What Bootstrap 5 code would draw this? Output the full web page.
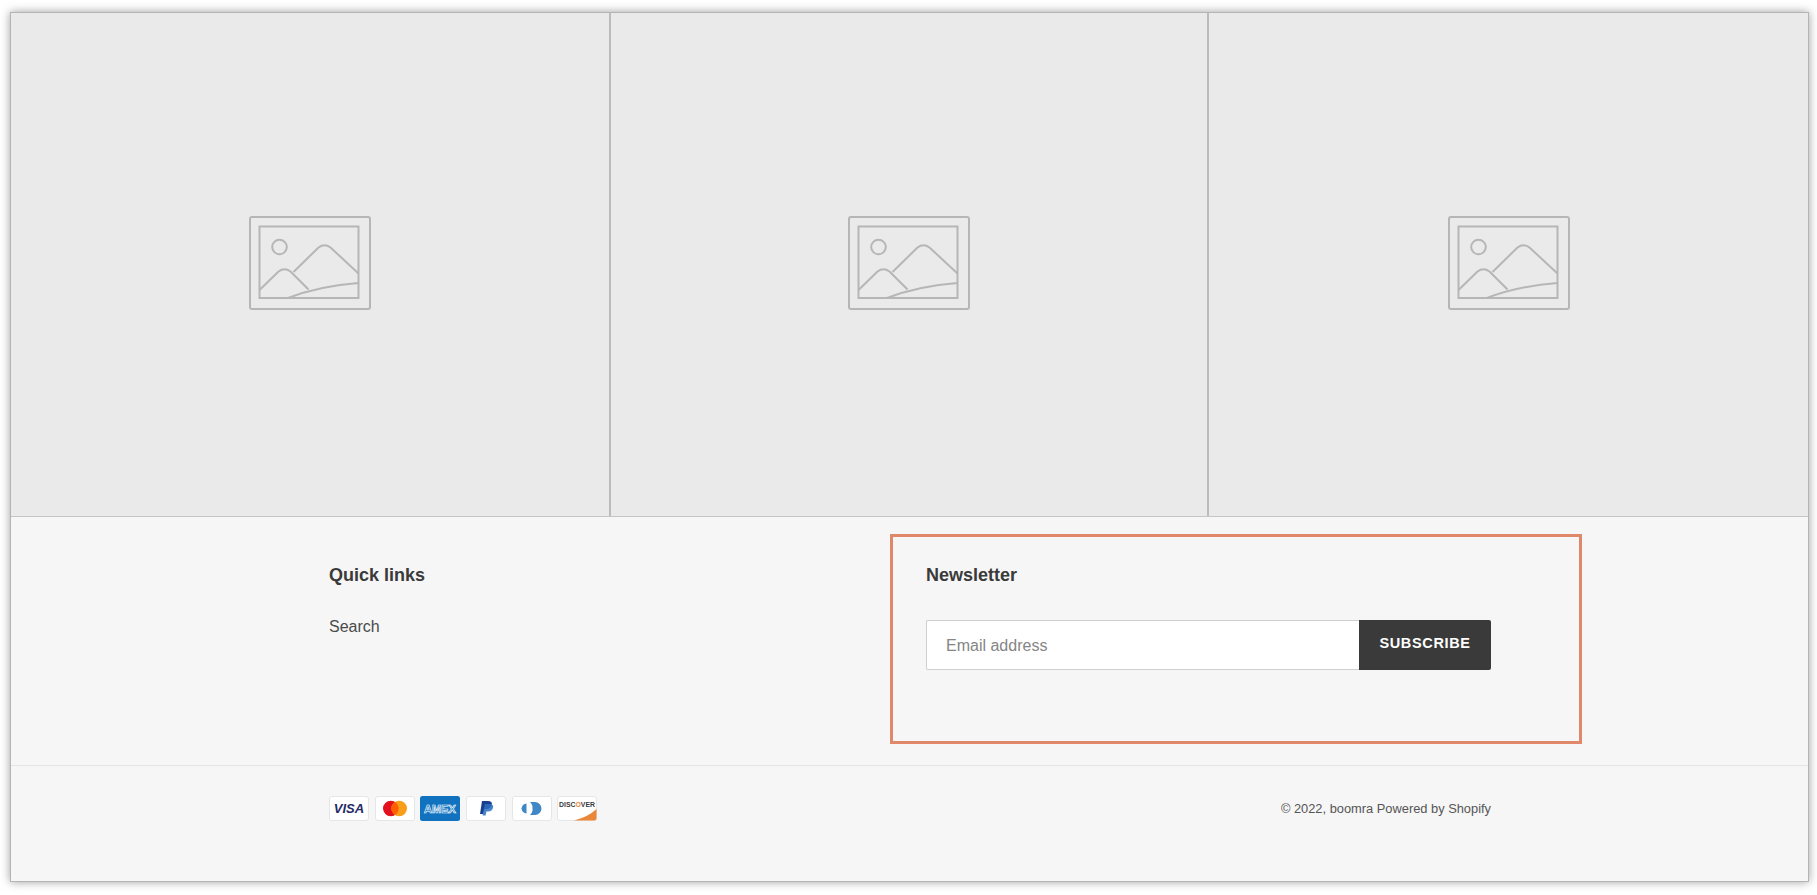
<!DOCTYPE html>
<html lang="en">
<head>
    <meta charset="UTF-8">
    <title>boomra</title>
    <link href="https://cdn.jsdelivr.net/npm/bootstrap@5.3.0/dist/css/bootstrap.min.css" rel="stylesheet">
    <style>
        html, body { height: 100%; }
        body {
            background: #fff;
            font-family: "Liberation Sans", Arial, sans-serif;
            color: #3a3a3a;
            padding: 12px 8px 13px 10px;
            overflow: hidden;
        }
        .shot-frame {
            position: relative;
            height: 870px;
            background: #f6f6f6;
            border: 1px solid #b4b4b4;
            box-shadow: 0 0 9px rgba(0, 0, 0, .38);
        }
        .tile {
            height: 503px;
            padding-bottom: 3px;
            background: #eaeaea;
            border-right: 2px solid #bcbcbc;
        }
        .tile-last { border-right: 0; }
        .tile-row { border-bottom: 1px solid #c6c6c6; padding-left: 1px; background: #eaeaea; }
        .foot-wrap { width: 1162px; margin-left: 318px; }
        .foot-top { height: 249px; border-bottom: 1px solid #e4e4e4; }
        .foot-left { width: 597px; padding-top: 47px; }
        .foot-right { flex: 1; padding-top: 47px; }
        .foot-title { font-size: 18px; font-weight: 700; line-height: 23px; margin: 0 0 28px; color: #3a3a3a; }
        .foot-right .foot-title { margin-bottom: 33px; }
        .foot-link { font-size: 16px; line-height: 24px; color: #4a4a4a; text-decoration: none; }
        .news-input {
            height: 50px;
            border: 1px solid #cfcfcf;
            border-right: 0;
            border-radius: 2px 0 0 2px;
            background: #fff;
            padding: 2px 19px 0;
            font-size: 16px;
            color: #3a3a3a;
        }
        .news-input::placeholder { color: #858585; opacity: 1; }
        .news-input:focus { box-shadow: none; border-color: #cfcfcf; background: #fff; }
        .news-btn {
            width: 132px;
            height: 50px;
            background: #3a3a3a;
            border: 0;
            border-radius: 0 2px 2px 0;
            color: #fff;
            font-size: 14.5px;
            font-weight: 700;
            letter-spacing: .65px;
            padding: 0 0 2px;
        }
        .news-btn:hover { background: #3a3a3a; color: #fff; }
        .foot-bottom { padding-top: 30px; }
        .pay-list { gap: 5.7px; }
        .pay-list svg { display: block; }
        .copy-text { font-size: 12.85px; color: #555; }
        .copy-text a { color: inherit; text-decoration: none; }
        .focus-box {
            position: absolute;
            left: 879px;
            top: 521px;
            width: 692px;
            height: 210px;
            border: 3px solid #e0886a;
            pointer-events: none;
        }
    </style>
</head>
<body>
<svg width="0" height="0" class="position-absolute">
    <symbol id="placeholder" viewBox="0 0 122 94">
        <g fill="none" stroke="#b6b6b6" stroke-width="2">
            <rect x="1" y="1" width="120" height="92" rx="2"/>
            <rect x="10.500" y="10.500" width="99" height="71.500"/>
            <circle cx="30.500" cy="31" r="7.300"/>
            <path d="M10.500 74 L29.500 55.500 Q35.500 51 41.500 55.500 L59.500 73.500"/>
            <path d="M44.500 56 L69.500 31.500 Q75.500 27 81.500 31.500 L109.500 57.500"/>
            <path d="M39 82 Q70 70 109.500 67"/>
        </g>
    </symbol>
</svg>

<div class="shot-frame">
    <div class="row g-0 tile-row">
        <div class="col-4">
            <div class="tile d-flex align-items-center justify-content-center">
                <svg width="122" height="94"><use href="#placeholder"/></svg>
            </div>
        </div>
        <div class="col-4">
            <div class="tile d-flex align-items-center justify-content-center">
                <svg width="122" height="94"><use href="#placeholder"/></svg>
            </div>
        </div>
        <div class="col-4">
            <div class="tile tile-last d-flex align-items-center justify-content-center">
                <svg width="122" height="94"><use href="#placeholder"/></svg>
            </div>
        </div>
    </div>

    <div class="foot-top">
        <div class="foot-wrap d-flex">
            <div class="foot-left">
                <h4 class="foot-title">Quick links</h4>
                <a href="#" class="foot-link">Search</a>
            </div>
            <div class="foot-right">
                <h4 class="foot-title">Newsletter</h4>
                <form class="input-group">
                    <input type="email" class="form-control news-input" placeholder="Email address">
                    <button type="button" class="btn news-btn">SUBSCRIBE</button>
                </form>
            </div>
        </div>
    </div>

    <div class="foot-wrap foot-bottom d-flex justify-content-between align-items-center">
        <div class="d-flex pay-list">
            <svg width="40" height="25" viewBox="0 0 40 25">
                <rect x=".5" y=".5" width="39" height="24" rx="2.500" fill="#fff" stroke="#e6e6e6"/>
                <text x="20" y="17" text-anchor="middle" font-family="Liberation Sans" font-size="13" font-weight="700" font-style="italic" fill="#1f2a66">VISA</text>
            </svg>
            <svg width="40" height="25" viewBox="0 0 40 25">
                <rect x=".5" y=".5" width="39" height="24" rx="2.500" fill="#fff" stroke="#e6e6e6"/>
                <circle cx="15.800" cy="12.500" r="7.800" fill="#e3111d"/>
                <circle cx="24.200" cy="12.500" r="7.800" fill="#f79e1b"/>
                <path d="M20 5.900a7.800 7.800 0 0 1 0 13.200a7.800 7.800 0 0 1 0-13.200z" fill="#ff5f00"/>
            </svg>
            <svg width="40" height="25" viewBox="0 0 40 25">
                <rect width="40" height="25" rx="2.500" fill="#1172c0"/>
                <text x="20" y="16.500" text-anchor="middle" font-family="Liberation Sans" font-size="10.500" font-weight="700" fill="#1172c0" stroke="#fff" stroke-width=".6" textLength="32" lengthAdjust="spacingAndGlyphs">AMEX</text>
            </svg>
            <svg width="40" height="25" viewBox="0 0 40 25">
                <rect x=".5" y=".5" width="39" height="24" rx="2.500" fill="#fff" stroke="#e6e6e6"/>
                <path d="M16 5h6q4.500 0 3.800 3.600q-.8 4.400-5.300 4.400h-2.200l-1 5h-3.300z" fill="#1b3f8f"/>
                <path d="M18.800 8h5.500q3.500.5 2.800 3.600q-.9 4-5 4h-1.700l-.8 4h-3z" fill="#2b6fc0" opacity=".85"/>
            </svg>
            <svg width="40" height="25" viewBox="0 0 40 25">
                <rect x=".5" y=".5" width="39" height="24" rx="2.500" fill="#fff" stroke="#e6e6e6"/>
                <path d="M14.500 7.500v10a6 6 0 0 1-5-5a6 6 0 0 1 5-5z" fill="#3f88c5"/>
                <path d="M18 6h5a6.500 6.500 0 0 1 0 13h-5a7.500 7.500 0 0 0 2.500-6.500a7.500 7.500 0 0 0-2.500-6.500z" fill="#3f88c5"/>
            </svg>
            <svg width="40" height="25" viewBox="0 0 40 25">
                <rect x=".5" y=".5" width="39" height="24" rx="2.500" fill="#fff" stroke="#e6e6e6"/>
                <path d="M39.500 13V22a2.500 2.500 0 0 1-2.500 2.500H17Q31 21 39.500 13z" fill="#e9873a"/>
                <text x="20" y="11" text-anchor="middle" font-family="Liberation Sans" font-size="7.500" font-weight="700" fill="#3a3a3a" textLength="36" lengthAdjust="spacingAndGlyphs">DISC<tspan fill="#e9873a">O</tspan>VER</text>
            </svg>
        </div>
        <div class="copy-text">&copy; 2022, <a href="#">boomra</a> <a href="#">Powered by Shopify</a></div>
    </div>

    <div class="focus-box"></div>
</div>

<script src="https://cdn.jsdelivr.net/npm/bootstrap@5.3.0/dist/js/bootstrap.bundle.min.js"></script>
</body>
</html>
